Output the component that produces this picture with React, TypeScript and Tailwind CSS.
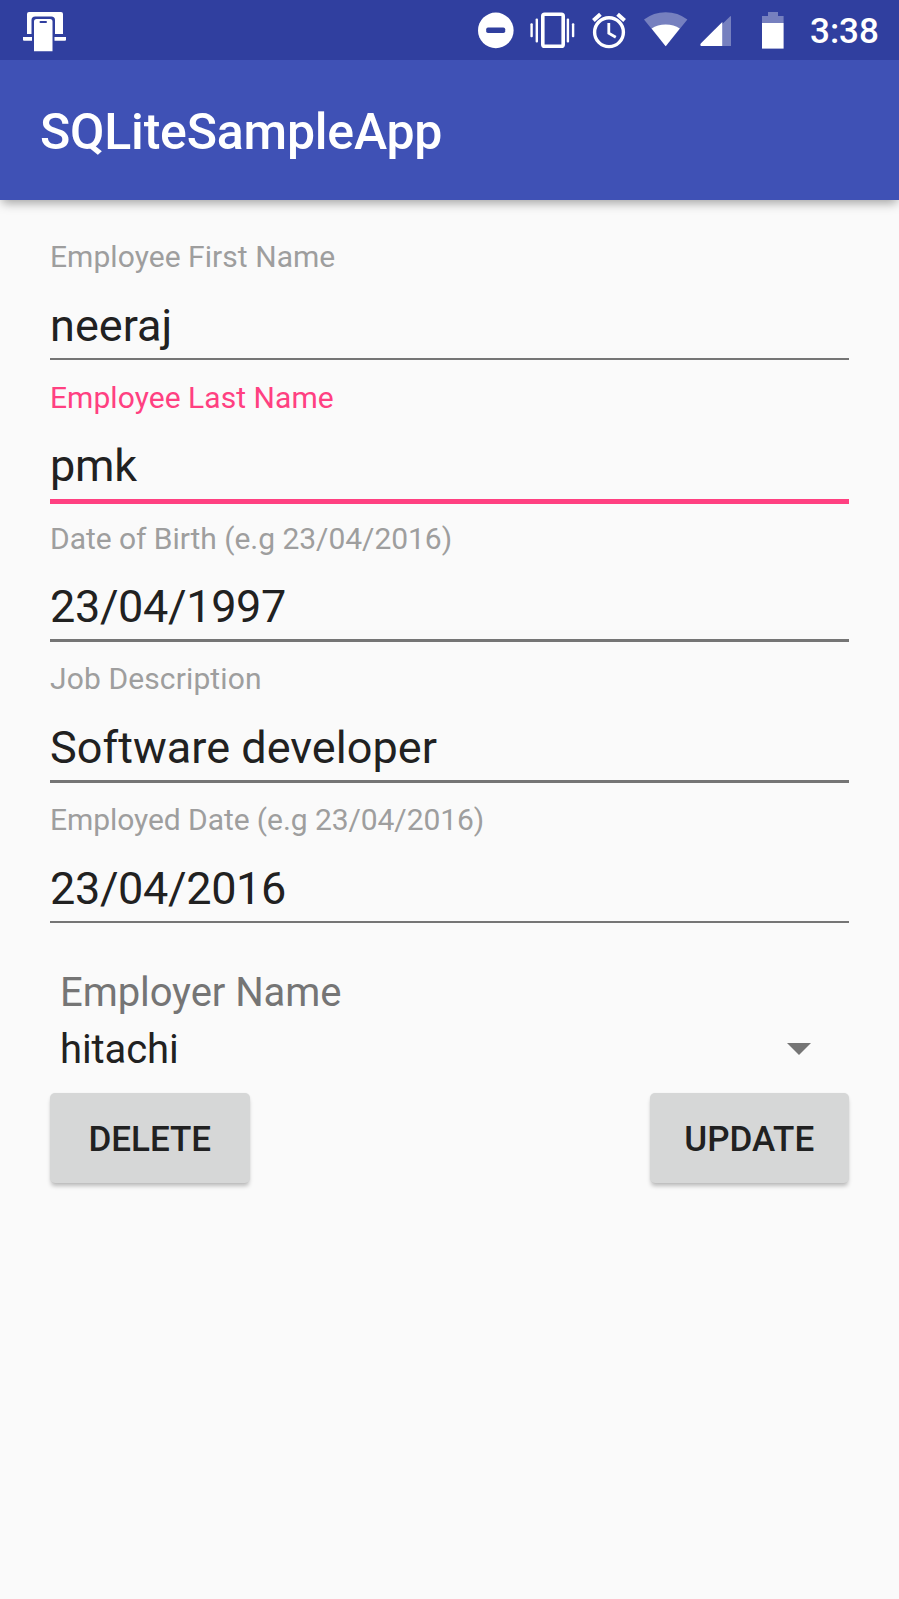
type FieldProps = {
  label: string;
  value: string;
  active?: boolean;
  labelTracking?: string;
  valueTracking?: string;
};

function Field({
  label,
  value,
  active = false,
  labelTracking = "tracking-[0.05px]",
  valueTracking = "tracking-[0.04px]",
}: FieldProps) {
  return (
    <label className="flex h-[140.75px] flex-col">
      <span
        className={`h-9 text-[30px] leading-9 whitespace-nowrap ${labelTracking} ${active ? "text-[#ff4081]" : "text-[#9e9e9e]"}`}
      >
        {label}
      </span>
      <span
        className={`mt-[23.6px] h-[53.4px] text-[45px] leading-[54px] whitespace-nowrap text-[#212121] ${valueTracking}`}
      >
        {value}
      </span>
      <span
        className={active ? "mt-[6px] h-[5px] bg-[#ff4081]" : "mt-[6px] h-[2.5px] bg-[#757575]"}
      />
    </label>
  );
}

function StatusBar() {
  return (
    <div className="relative z-10 flex h-[60px] shrink-0 items-center bg-[#303f9f] pr-5 pl-[22px] text-white">
      <svg className="h-[60px] w-[46px]" viewBox="22 0 46 60" fill="currentColor">
        <path d="M29 12H61Q63 12 63 14V34H55V20Q55 16.4 51.3 16.4H35.2Q31.5 16.4 31.5 20V34H27V14Q27 12 29 12Z" />
        <path d="M23 37H32V40.8H24Q23 40.8 23 39.8ZM54.5 37H66V39.8Q66 40.8 65 40.8H54.5Z" />
        <path
          fillRule="evenodd"
          d="M36.5 19H50Q52.5 19 52.5 21.5V51.2H34V21.5Q34 19 36.5 19ZM40.5 21A1 1 0 0 0 40.5 23H46A1 1 0 0 0 46 21Z"
        />
      </svg>
      <div className="ml-auto flex items-center">
        <svg className="h-[60px] w-9" viewBox="478 0 36 60" fill="currentColor">
          <circle cx="495.8" cy="30.4" r="17.8" />
          <rect x="486.2" y="27.5" width="19" height="5.6" rx="1.8" fill="#303f9f" />
        </svg>
        <svg className="ml-4 h-[60px] w-[46px]" viewBox="530 0 46 60" fill="currentColor">
          <rect x="542.8" y="14.2" width="20.4" height="32" rx="1.8" fill="none" stroke="currentColor" strokeWidth="3.6" />
          <rect x="535.6" y="18.5" width="2.4" height="24" rx="1" />
          <rect x="530.4" y="23.3" width="2.4" height="14" rx="1" />
          <rect x="566.7" y="18.5" width="2.4" height="24" rx="1" />
          <rect x="571.9" y="23.3" width="2.4" height="14" rx="1" />
        </svg>
        <svg
          className="ml-4 h-[60px] w-9"
          viewBox="592 0 36 60"
          fill="none"
          stroke="currentColor"
          strokeWidth="3.4"
        >
          <circle cx="609" cy="32.2" r="14.4" />
          <path d="M593.4 20.4L600.4 14.2M617.6 14.2L624.6 20.4" strokeWidth="4" />
          <path d="M608.8 23V33.2L615.8 37.2" strokeWidth="2.8" />
        </svg>
        <svg className="ml-4 h-[60px] w-11" viewBox="644 0 44 60" fill="currentColor">
          <path d="M665.7 46.2L644 19.6Q653.5 12.3 665.7 12.3T687.4 19.6Z" fill="#7680bf" />
          <path d="M665.7 46.2L651.6 28.4Q657.5 24.5 665.7 24.5T679.8 28.4Z" />
        </svg>
        <svg className="ml-3 h-[60px] w-[31px]" viewBox="700 0 31 60" fill="currentColor">
          <path d="M722.3 24V46H731V16.4Q731 15.4 730 16.4Z" fill="#7680bf" />
          <path d="M722.3 22V46H701Q699.7 44.6 701 43.3Z" />
        </svg>
        <svg className="ml-[31px] h-[60px] w-[22px]" viewBox="762 0 22 60" fill="currentColor">
          <path d="M762 16H768V12H778V16H783.6V23H762Z" fill="#7680bf" />
          <rect x="762" y="23" width="21.6" height="25.6" />
        </svg>
        <span className="ml-[26px] w-[69px] pt-[4px] text-[35px] leading-[62px] font-medium whitespace-nowrap">
          3:38
        </span>
      </div>
    </div>
  );
}

function ActionButton({ children }: { children: string }) {
  return (
    <button className="h-[90.5px] w-[199.5px] rounded-[5px] bg-[#d6d7d7] pt-[3px] text-[35px] leading-[42px] font-medium text-[#212121] shadow-[0_4px_4px_-1px_rgba(0,0,0,0.25),0_0_2px_rgba(0,0,0,0.06)]">
      {children}
    </button>
  );
}

export default function App() {
  return (
    <div className="flex h-[1599px] w-[899px] flex-col overflow-hidden bg-[#fafafa] font-['Roboto',sans-serif]">
      <StatusBar />
      <header className="flex h-[140px] shrink-0 items-center bg-[#3f51b5] pt-[4px] pl-10 shadow-[0_5px_10px_-2px_rgba(0,0,0,0.36)]">
        <h1 className="text-[50px] leading-[60px] font-medium tracking-[-0.2px] whitespace-nowrap text-white">
          SQLiteSampleApp
        </h1>
      </header>
      <main className="flex flex-col px-[50px] pt-[39px]">
        <Field label="Employee First Name" value="neeraj" />
        <Field label="Employee Last Name" value="pmk" active valueTracking="tracking-[-0.3px]" />
        <Field
          label="Date of Birth (e.g 23/04/2016)"
          value="23/04/1997"
          labelTracking="tracking-[-0.04px]"
          valueTracking="tracking-[-0.35px]"
        />
        <Field label="Job Description" value="Software developer" labelTracking="tracking-[0.12px]" />
        <Field
          label="Employed Date (e.g 23/04/2016)"
          value="23/04/2016"
          labelTracking="tracking-[-0.07px]"
          valueTracking="tracking-[-0.35px]"
        />
        <div className="mt-[26px] pl-[10px] text-[40px] leading-[48px]">
          <div className="tracking-[-0.08px] text-[#757575]">Employer Name</div>
          <div className="mt-[9px] flex items-center justify-between pr-[38px] text-[#212121]">
            <span className="tracking-[-0.1px]">hitachi</span>
            <svg className="-mt-[2px] h-3 w-6" viewBox="0 0 24 12" fill="#757575">
              <path d="M0 0H24L12 12Z" />
            </svg>
          </div>
        </div>
        <div className="mt-[19px] flex justify-between">
          <ActionButton>DELETE</ActionButton>
          <ActionButton>UPDATE</ActionButton>
        </div>
      </main>
    </div>
  );
}
